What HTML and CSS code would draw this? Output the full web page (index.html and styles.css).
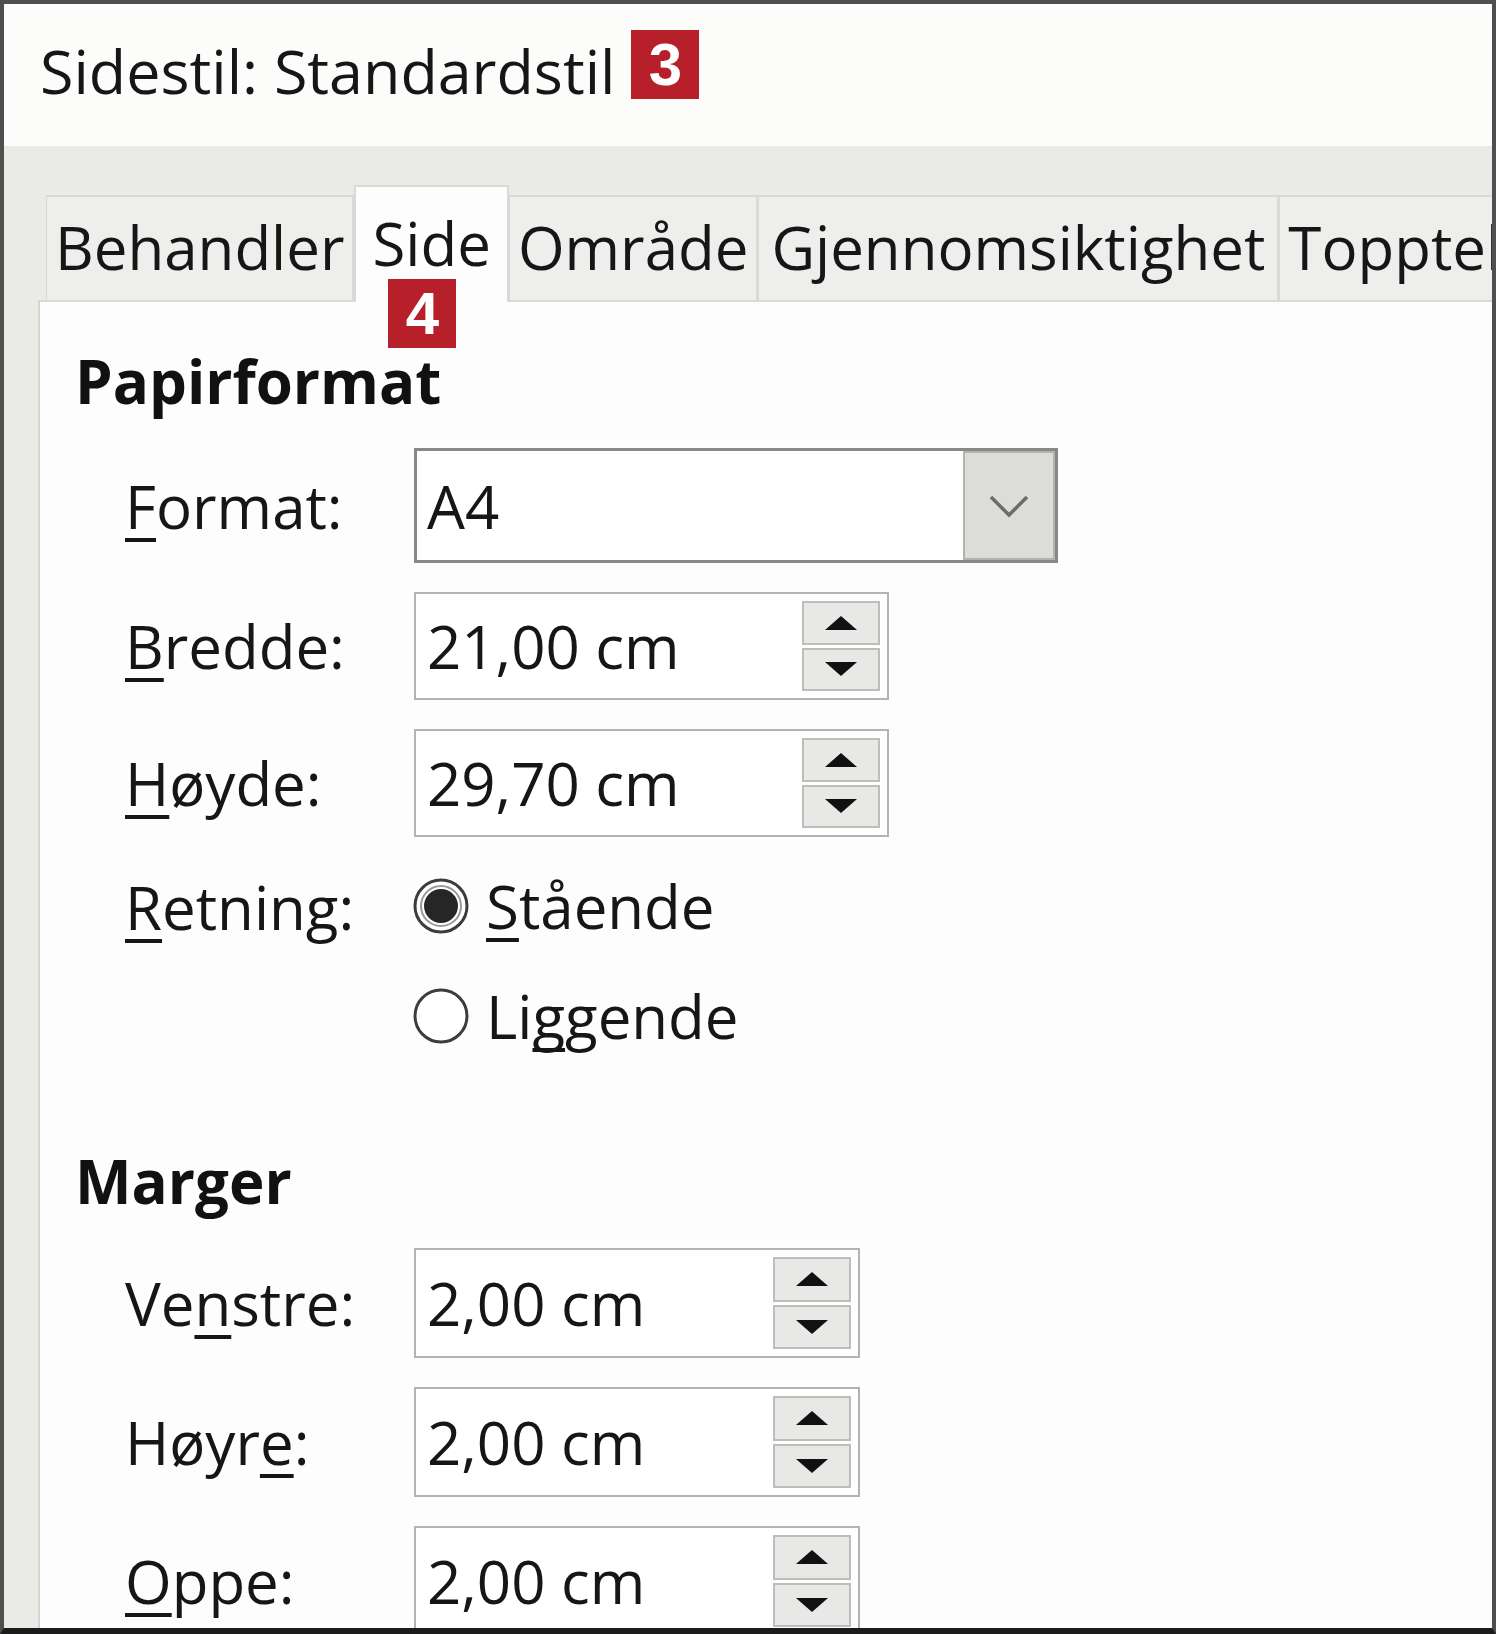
FILE: index.html
```html
<!DOCTYPE html>
<html lang="nb">
<head>
    <meta charset="UTF-8">
    <meta name="viewport" content="width=device-width, initial-scale=1.0">
    <title>Sidestil: Standardstil</title>
    <link rel="stylesheet" href="styles.css">
</head>
<body>
    <div class="window">
        <header class="title-bar">
            <span class="title">Sidestil: Standardstil</span>
            <span class="badge">3</span>
        </header>

        <div class="dialog">
            <div class="tabs">
                <div class="tab">Behandler</div>
                <div class="tab active">Side<span class="badge badge-tab">4</span></div>
                <div class="tab">Område</div>
                <div class="tab tab-wide">Gjennomsiktighet</div>
                <div class="tab">Topptekst</div>
            </div>

            <div class="page">
                <h2 class="section-title">Papirformat</h2>
                <div class="form-grid">
                    <label class="label"><u>F</u>ormat:</label>
                    <div class="combo">
                        <span class="field-value">A4</span>
                        <span class="combo-button">
                            <svg width="42" height="26" viewBox="0 0 42 26"><polyline points="3,4 21,22 39,4" fill="none" stroke="#6b6d6b" stroke-width="3.5"/></svg>
                        </span>
                    </div>

                    <label class="label"><u>B</u>redde:</label>
                    <div class="spin">
                        <span class="field-value">21,00 cm</span>
                        <span class="spin-buttons">
                            <span class="spin-btn"><svg width="34" height="16" viewBox="0 0 34 16"><polygon points="17,1 33,15 1,15" fill="#111"/></svg></span>
                            <span class="spin-btn"><svg width="34" height="16" viewBox="0 0 34 16"><polygon points="1,1 33,1 17,15" fill="#111"/></svg></span>
                        </span>
                    </div>

                    <label class="label"><u>H</u>øyde:</label>
                    <div class="spin">
                        <span class="field-value">29,70 cm</span>
                        <span class="spin-buttons">
                            <span class="spin-btn"><svg width="34" height="16" viewBox="0 0 34 16"><polygon points="17,1 33,15 1,15" fill="#111"/></svg></span>
                            <span class="spin-btn"><svg width="34" height="16" viewBox="0 0 34 16"><polygon points="1,1 33,1 17,15" fill="#111"/></svg></span>
                        </span>
                    </div>

                    <label class="label label-top"><u>R</u>etning:</label>
                    <div class="radios">
                        <div class="radio-row">
                            <svg width="58" height="58" viewBox="0 0 58 58">
                                <circle cx="29" cy="29" r="26" fill="#fff" stroke="#3c3c3c" stroke-width="3"/>
                                <circle cx="29" cy="29" r="20" fill="none" stroke="#9a9a9a" stroke-width="2"/>
                                <circle cx="29" cy="29" r="17" fill="#262626"/>
                            </svg>
                            <span><u>S</u>tående</span>
                        </div>
                        <div class="radio-row">
                            <svg width="58" height="58" viewBox="0 0 58 58">
                                <circle cx="29" cy="29" r="26" fill="#fff" stroke="#3c3c3c" stroke-width="3"/>
                            </svg>
                            <span>Li<u>g</u>gende</span>
                        </div>
                    </div>
                </div>

                <h2 class="section-title section-gap">Marger</h2>
                <div class="form-grid">
                    <label class="label">Ve<u>n</u>stre:</label>
                    <div class="spin spin-narrow">
                        <span class="field-value">2,00 cm</span>
                        <span class="spin-buttons">
                            <span class="spin-btn"><svg width="34" height="16" viewBox="0 0 34 16"><polygon points="17,1 33,15 1,15" fill="#111"/></svg></span>
                            <span class="spin-btn"><svg width="34" height="16" viewBox="0 0 34 16"><polygon points="1,1 33,1 17,15" fill="#111"/></svg></span>
                        </span>
                    </div>

                    <label class="label">Høyr<u>e</u>:</label>
                    <div class="spin spin-narrow">
                        <span class="field-value">2,00 cm</span>
                        <span class="spin-buttons">
                            <span class="spin-btn"><svg width="34" height="16" viewBox="0 0 34 16"><polygon points="17,1 33,15 1,15" fill="#111"/></svg></span>
                            <span class="spin-btn"><svg width="34" height="16" viewBox="0 0 34 16"><polygon points="1,1 33,1 17,15" fill="#111"/></svg></span>
                        </span>
                    </div>

                    <label class="label"><u>O</u>ppe:</label>
                    <div class="spin spin-narrow">
                        <span class="field-value">2,00 cm</span>
                        <span class="spin-buttons">
                            <span class="spin-btn"><svg width="34" height="16" viewBox="0 0 34 16"><polygon points="17,1 33,15 1,15" fill="#111"/></svg></span>
                            <span class="spin-btn"><svg width="34" height="16" viewBox="0 0 34 16"><polygon points="1,1 33,1 17,15" fill="#111"/></svg></span>
                        </span>
                    </div>
                </div>
            </div>
        </div>
    </div>
</body>
</html>
```

FILE: styles.css
```css
body {
    margin: 0;
    padding: 0;
    background-color: #ffffff;
    font-family: "Open Sans", "Noto Sans", sans-serif;
    font-size: 60px;
    color: #161616;
}

.window {
    box-sizing: border-box;
    width: 1496px;
    height: 1634px;
    border: 4px solid #4e4f4e;
    border-bottom: 6px solid #1c1c1c;
    background-color: #eaeae7;
    overflow: hidden;
    display: flex;
    flex-direction: column;
}

.title-bar {
    height: 142px;
    box-sizing: border-box;
    padding: 26px 0 0 36px;
    background-color: #fcfcfb;
    display: flex;
    align-items: flex-start;
    gap: 16px;
    line-height: 82px;
}

.title {
    font-size: 61px;
}

.badge {
    display: inline-block;
    width: 68px;
    height: 69px;
    background-color: #b71f2b;
    color: #ffffff;
    font-family: "Liberation Sans", Arial, sans-serif;
    font-weight: bold;
    font-size: 60px;
    line-height: 69px;
    text-align: center;
    margin-top: 0;
}

.dialog {
    flex: 1;
    padding: 39px 0 0 34px;
    display: flex;
    flex-direction: column;
    min-height: 0;
}

.tabs {
    display: flex;
    align-items: flex-end;
    padding-left: 8px;
    white-space: nowrap;
    position: relative;
    z-index: 1;
}

.tab {
    box-sizing: border-box;
    height: 105px;
    line-height: 101px;
    padding: 0 8px;
    background-color: #eeeeec;
    border: 2px solid #d9d9d5;
    border-bottom: none;
    border-left-width: 1px;
}

.tab-wide {
    padding: 0 12px;
}

.tab.active {
    position: relative;
    height: 117px;
    margin-bottom: -2px;
    padding: 6px 16px 0;
    background-color: #fdfdfd;
    border-left-width: 2px;
}

.badge-tab {
    position: absolute;
    left: 32px;
    top: 92px;
}

.page {
    flex: 1;
    background-color: #fdfdfd;
    border-top: 2px solid #d9d9d5;
    border-left: 2px solid #d4d4d0;
    padding-left: 35px;
}

.section-title {
    margin: 38px 0 0;
    font-size: 60px;
    font-weight: bold;
    line-height: 82px;
    color: #111111;
}

.section-gap {
    margin-top: 84px;
}

.form-grid {
    display: grid;
    grid-template-columns: 289px auto;
    row-gap: 29px;
    align-items: center;
    justify-items: start;
    margin: 26px 0 0 50px;
}

.label {
    line-height: 82px;
}

.label-top {
    align-self: start;
}

u {
    text-decoration-thickness: 4px;
    text-underline-offset: 9px;
    text-decoration-skip-ink: none;
}

.field-value {
    flex: 1;
    padding-left: 10px;
    line-height: 82px;
}

.combo {
    box-sizing: border-box;
    width: 644px;
    height: 115px;
    display: flex;
    align-items: center;
    border: 3px solid #868985;
    background-color: #ffffff;
}

.combo-button {
    align-self: stretch;
    width: 88px;
    background-color: #dcdcd9;
    border: 2px solid #b2b3b0;
    display: flex;
    align-items: center;
    justify-content: center;
}

.spin {
    box-sizing: border-box;
    width: 475px;
    height: 108px;
    display: flex;
    align-items: center;
    border: 2px solid #b3b4b0;
    background-color: #ffffff;
    padding-right: 7px;
}

.spin-narrow {
    width: 446px;
    height: 110px;
}

.spin .field-value {
    padding-left: 11px;
}

.spin-buttons {
    align-self: stretch;
    display: flex;
    flex-direction: column;
    gap: 3px;
    padding: 7px 0;
}

.spin-btn {
    box-sizing: border-box;
    flex: 1;
    width: 78px;
    background-color: #e8e8e6;
    border: 2px solid #bdbeba;
    display: flex;
    align-items: center;
    justify-content: center;
}

.radios {
    display: flex;
    flex-direction: column;
    gap: 30px;
}

.radio-row {
    height: 80px;
    display: flex;
    align-items: center;
    gap: 16px;
    margin-left: -2px;
    line-height: 82px;
}
```
